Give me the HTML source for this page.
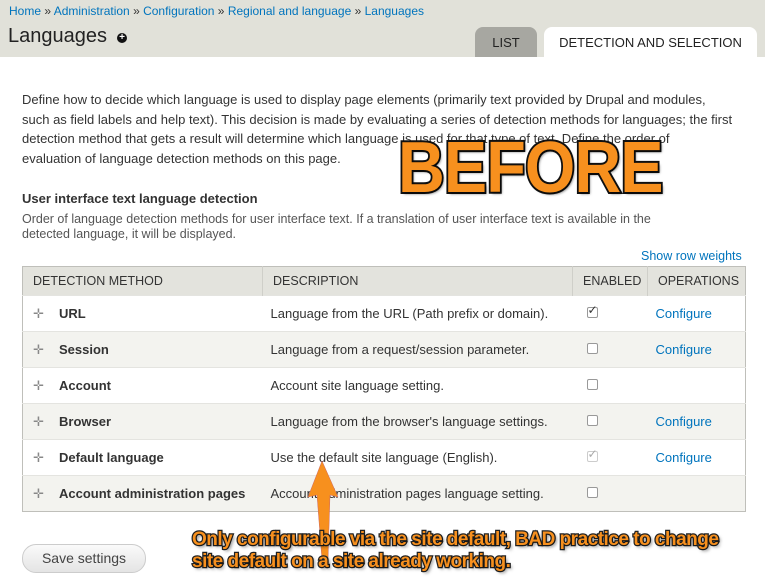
<!DOCTYPE html>
<html><head><style>
body{margin:0;width:765px;height:577px;background:#fff;position:relative;overflow:hidden;font-family:"Liberation Sans",sans-serif;color:#333}
.a{position:absolute;white-space:nowrap}
.hdr{position:absolute;left:0;top:0;width:765px;height:57px;background:#e1e1d9}
a{color:#0074bd;text-decoration:none}
.p{font-size:13px;line-height:19.7px;color:#333}
table{position:absolute;left:22px;top:266px;width:724px;border-collapse:collapse;font-size:13px;border:1px solid #bfbfba;table-layout:fixed}
th{background:#e3e3dd;font-weight:normal;text-align:left;height:28px;padding:0 0 0 10px;border-right:1px solid #cfcfc9;color:#333;font-size:12.5px;white-space:nowrap}
td{height:35px;padding:0 0 0 8px;border-top:1px solid #e4e4e0;white-space:nowrap}
tr.o td{background:#f3f3ef}
.h{color:#888;font-size:13px;display:inline-block;width:26px;padding-left:2px}
.cb{display:inline-block;width:9px;height:9px;border:1px solid #999;border-radius:2px;background:#fff;position:relative;margin-left:6px}
.ck::after{content:"✓";position:absolute;left:0;top:-5px;font-size:12px;color:#333}
.ckg::after{content:"✓";position:absolute;left:0;top:-5px;font-size:12px;color:#aaa}
.big{font-family:"Liberation Sans",sans-serif;font-weight:bold;color:#f7901e;-webkit-text-stroke:4px #111;paint-order:stroke fill;text-shadow:2px 2px 3px rgba(0,0,0,.5)}
</style></head><body>
<div class="hdr"></div>
<div class="a" style="left:9px;top:4px;font-size:12px;color:#333"><a>Home</a> » <a>Administration</a> » <a>Configuration</a> » <a>Regional and language</a> » <a>Languages</a></div>
<div class="a" style="left:8px;top:25px;font-size:20px;color:#222">Languages</div>
<div class="a" style="left:117px;top:33px;width:10px;height:10px;border-radius:50%;background:#111;color:#fff;font-size:10px;line-height:10px;text-align:center;font-weight:bold">+</div>
<div class="a" style="left:475px;top:27px;width:62px;height:30px;background:#a7a7a1;border-radius:8px 8px 0 0;font-size:13px;line-height:31px;text-align:center;color:#222">LIST</div>
<div class="a" style="left:544px;top:27px;width:213px;height:30px;background:#fff;border-radius:8px 8px 0 0;font-size:13px;line-height:31px;text-align:center;color:#222">DETECTION AND SELECTION</div>
<div class="a p" style="left:22px;top:90px">Define how to decide which language is used to display page elements (primarily text provided by Drupal and modules,<br>such as field labels and help text). This decision is made by evaluating a series of detection methods for languages; the first<br>detection method that gets a result will determine which language is used for that type of text. Define the order of<br>evaluation of language detection methods on this page.</div>
<div class="a" style="left:22px;top:191px;font-size:13px;font-weight:bold;color:#333">User interface text language detection</div>
<div class="a" style="left:22px;top:212px;font-size:12.5px;line-height:15px;color:#555">Order of language detection methods for user interface text. If a translation of user interface text is available in the<br>detected language, it will be displayed.</div>
<div class="a" style="left:641px;top:249px;font-size:12.5px"><a>Show row weights</a></div>
<table>
<col style="width:240px"><col style="width:310px"><col style="width:75px"><col>
<tr><th>DETECTION METHOD</th><th>DESCRIPTION</th><th>ENABLED</th><th style="border-right:0">OPERATIONS</th></tr>
<tr><td><span class="h">✛</span><b>URL</b></td><td>Language from the URL (Path prefix or domain).</td><td><span class="cb ck"></span></td><td><a>Configure</a></td></tr>
<tr class="o"><td><span class="h">✛</span><b>Session</b></td><td>Language from a request/session parameter.</td><td><span class="cb"></span></td><td><a>Configure</a></td></tr>
<tr><td><span class="h">✛</span><b>Account</b></td><td>Account site language setting.</td><td><span class="cb"></span></td><td></td></tr>
<tr class="o"><td><span class="h">✛</span><b>Browser</b></td><td>Language from the browser's language settings.</td><td><span class="cb"></span></td><td><a>Configure</a></td></tr>
<tr><td><span class="h">✛</span><b>Default language</b></td><td>Use the default site language (English).</td><td><span class="cb ckg" style="border-color:#ccc"></span></td><td><a>Configure</a></td></tr>
<tr class="o"><td><span class="h">✛</span><b>Account administration pages</b></td><td>Account administration pages language setting.</td><td><span class="cb"></span></td><td></td></tr>
</table>
<div class="a" style="left:22px;top:544px;width:122px;height:27px;border:1px solid #ccc;border-radius:14px;background:linear-gradient(#fafafa,#e4e4e4);font-size:14px;line-height:27px;text-align:center;color:#444">Save settings</div>
<svg class="a" style="left:300px;top:455px" width="50" height="110"><polygon points="22,6 8,42 17,40 22,105 28,105 30,40 38,42" fill="#f7901e" stroke="#c66" stroke-width="0.5"/></svg>
<div class="a big" style="left:398px;top:127px;font-size:72px;transform:scaleX(0.9);transform-origin:left top;letter-spacing:-1px">BEFORE</div>
<div class="a big" style="left:192px;top:529px;font-size:19px;line-height:22px;-webkit-text-stroke:2.5px #222;letter-spacing:-0.5px">Only configurable via the site default, BAD practice to change<br>site default on a site already working.</div>
</body></html>
